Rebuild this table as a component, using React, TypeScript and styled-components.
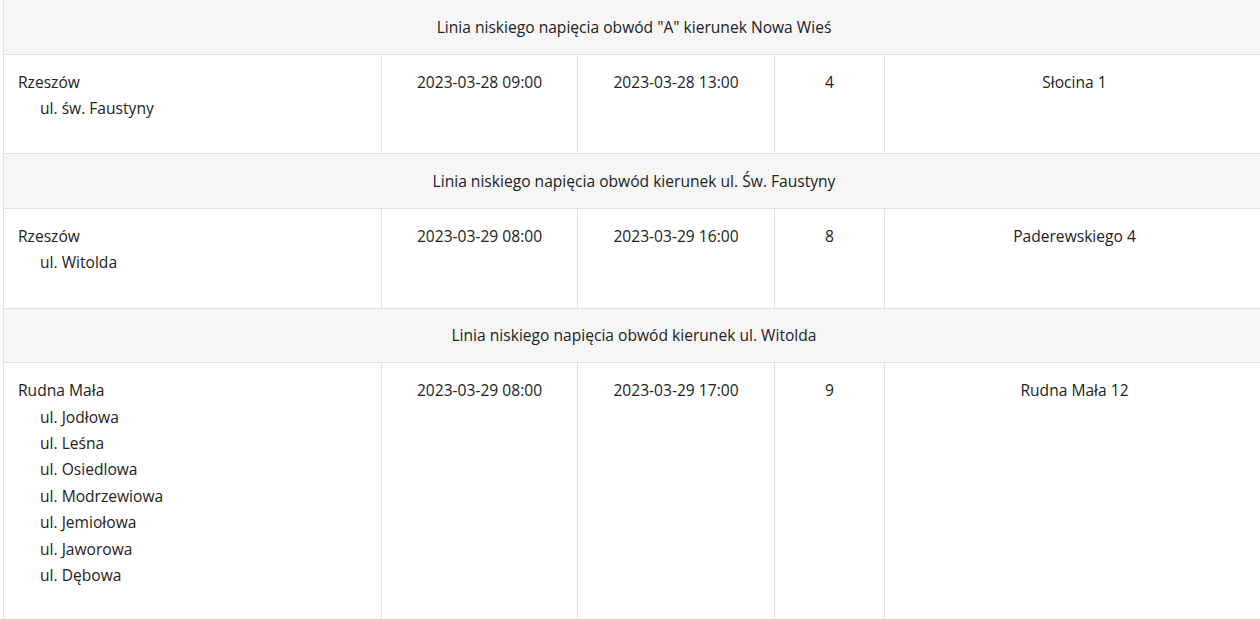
import styled, { createGlobalStyle } from "styled-components";

const GlobalStyle = createGlobalStyle`
  html, body {
    margin: 0;
    padding: 0;
    background: #ffffff;
    overflow: hidden;
  }
  body {
    font-family: "Open Sans", "Noto Sans", sans-serif;
    color: #222222;
  }
`;

const Page = styled.div`
  padding-left: 3px;
  margin-top: -1px;
  width: 1265px;
`;

const Table = styled.table`
  width: 1262px;
  border-collapse: collapse;
  table-layout: fixed;
  font-size: 15.6px;
  line-height: 26.4px;
`;

const HeadCell = styled.td`
  background: #f6f6f6;
  border: 1px solid #e2e2e2;
  text-align: center;
  height: 53.5px;
  padding: 0;
  vertical-align: middle;
`;

const Cell = styled.td<{ $align?: "left" | "center" }>`
  border: 1px solid #e2e2e2;
  vertical-align: top;
  text-align: ${({ $align }) => $align ?? "center"};
  padding: 14px 14px 32px;
`;

const Street = styled.div`
  padding-left: 22px;
`;

type Outage = {
  title: string;
  town: string;
  streets: string[];
  start: string;
  end: string;
  count: number;
  station: string;
};

const outages: Outage[] = [
  {
    title: 'Linia niskiego napięcia obwód "A" kierunek Nowa Wieś',
    town: "Rzeszów",
    streets: ["ul. św. Faustyny"],
    start: "2023-03-28 09:00",
    end: "2023-03-28 13:00",
    count: 4,
    station: "Słocina 1",
  },
  {
    title: "Linia niskiego napięcia obwód kierunek ul. Św. Faustyny",
    town: "Rzeszów",
    streets: ["ul. Witolda"],
    start: "2023-03-29 08:00",
    end: "2023-03-29 16:00",
    count: 8,
    station: "Paderewskiego 4",
  },
  {
    title: "Linia niskiego napięcia obwód kierunek ul. Witolda",
    town: "Rudna Mała",
    streets: [
      "ul. Jodłowa",
      "ul. Leśna",
      "ul. Osiedlowa",
      "ul. Modrzewiowa",
      "ul. Jemiołowa",
      "ul. Jaworowa",
      "ul. Dębowa",
    ],
    start: "2023-03-29 08:00",
    end: "2023-03-29 17:00",
    count: 9,
    station: "Rudna Mała 12",
  },
];

export default function App() {
  return (
    <Page>
      <GlobalStyle />
      <Table>
        <colgroup>
          <col style={{ width: 378 }} />
          <col style={{ width: 196 }} />
          <col style={{ width: 197 }} />
          <col style={{ width: 110 }} />
          <col />
        </colgroup>
        <tbody>
          {outages.map((o, i) => (
            <>
              <tr key={`h${i}`}>
                <HeadCell colSpan={5}>{o.title}</HeadCell>
              </tr>
              <tr key={`r${i}`}>
                <Cell $align="left">
                  <div>{o.town}</div>
                  {o.streets.map((s) => (
                    <Street key={s}>{s}</Street>
                  ))}
                </Cell>
                <Cell>{o.start}</Cell>
                <Cell>{o.end}</Cell>
                <Cell>{o.count}</Cell>
                <Cell>{o.station}</Cell>
              </tr>
            </>
          ))}
        </tbody>
      </Table>
    </Page>
  );
}
